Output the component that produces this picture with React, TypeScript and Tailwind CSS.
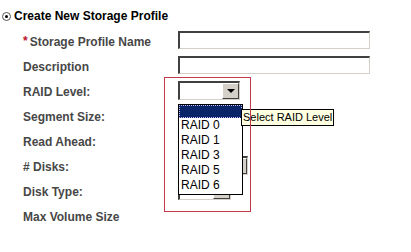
const font = { fontFamily: '"Liberation Sans", Arial, sans-serif' };

const Field = ({ w }: { w: string }) => (
  <div
    className={`${w} h-[18px] bg-white border-t-2 border-l-2 border-t-[#404040] border-l-[#404040] border-b border-r border-b-[#d4d0c8] border-r-[#d4d0c8]`}
  />
);

const Select = ({ w }: { w: string }) => (
  <div
    className={`${w} h-[19px] bg-white flex justify-end border-t-2 border-l-2 border-t-[#404040] border-l-[#404040] border-b border-r border-b-[#d4d0c8] border-r-[#d4d0c8]`}
  >
    <div className="w-[17px] h-full bg-[#d4d0c8] border border-t-white border-l-white border-b-[#404040] border-r-[#404040] flex items-center justify-center">
      <div className="w-0 h-0 border-l-[4px] border-r-[4px] border-t-[4px] border-l-transparent border-r-transparent border-t-black" />
    </div>
  </div>
);

const rows: { label: string; req?: boolean; ctrl?: JSX.Element }[] = [
  { label: "Storage Profile Name", req: true, ctrl: <Field w="w-[192px]" /> },
  { label: "Description", ctrl: <Field w="w-[192px]" /> },
  { label: "RAID Level:", ctrl: <Select w="w-[62px]" /> },
  { label: "Segment Size:", ctrl: <Select w="w-[62px]" /> },
  { label: "Read Ahead:", ctrl: <Select w="w-[62px]" /> },
  { label: "# Disks:", ctrl: <Select w="w-[70px]" /> },
  { label: "Disk Type:", ctrl: <Select w="w-[53px]" /> },
  { label: "Max Volume Size" },
];

export default function App() {
  return (
    <div className="relative w-[411px] h-[252px] bg-white overflow-hidden" style={font}>
      <div className="flex items-center h-[16px] mt-[8px] pl-[2px]">
        <div className="w-[9px] h-[9px] rounded-full border border-[#555] flex items-center justify-center bg-white">
          <div className="w-[3px] h-[3px] rounded-full bg-black" />
        </div>
        <span className="ml-[3px] text-[12px] font-bold text-black leading-[14px]">
          Create New Storage Profile
        </span>
      </div>

      <div className="flex flex-col mt-[7px]">
        {rows.map((r) => (
          <div key={r.label} className="flex h-[25px] items-start">
            <div className="w-[178px] pl-[23px] pt-[4px] text-[12px] leading-[14px] font-bold text-[#474747] flex">
              {r.req && <span className="text-[#c0102a] mr-[2px] -mt-[1px]">*</span>}
              <span>{r.label}</span>
            </div>
            {r.ctrl}
          </div>
        ))}
      </div>

      {/* open dropdown list */}
      <div className="absolute left-[178px] top-[104px] w-[65px] h-[91px] bg-white border border-black flex flex-col text-[12px] leading-[15px] text-black">
        <div className="h-[13px] bg-[#0a246a] border border-dotted border-[#c0c0ff]" />
        {["RAID 0", "RAID 1", "RAID 3", "RAID 5", "RAID 6"].map((t) => (
          <div key={t} className="pl-[2px] h-[15px]">
            {t}
          </div>
        ))}
      </div>

      {/* tooltip */}
      <div className="absolute left-[241px] top-[109px] h-[17px] bg-[#ffffe1] border border-black px-[1px] text-[11px] leading-[15px] text-black whitespace-nowrap">
        Select RAID Level
      </div>

      {/* highlight box */}
      <div className="absolute left-[164px] top-[77px] w-[87px] h-[135px] border border-[#c03a4a]" />
    </div>
  );
}
